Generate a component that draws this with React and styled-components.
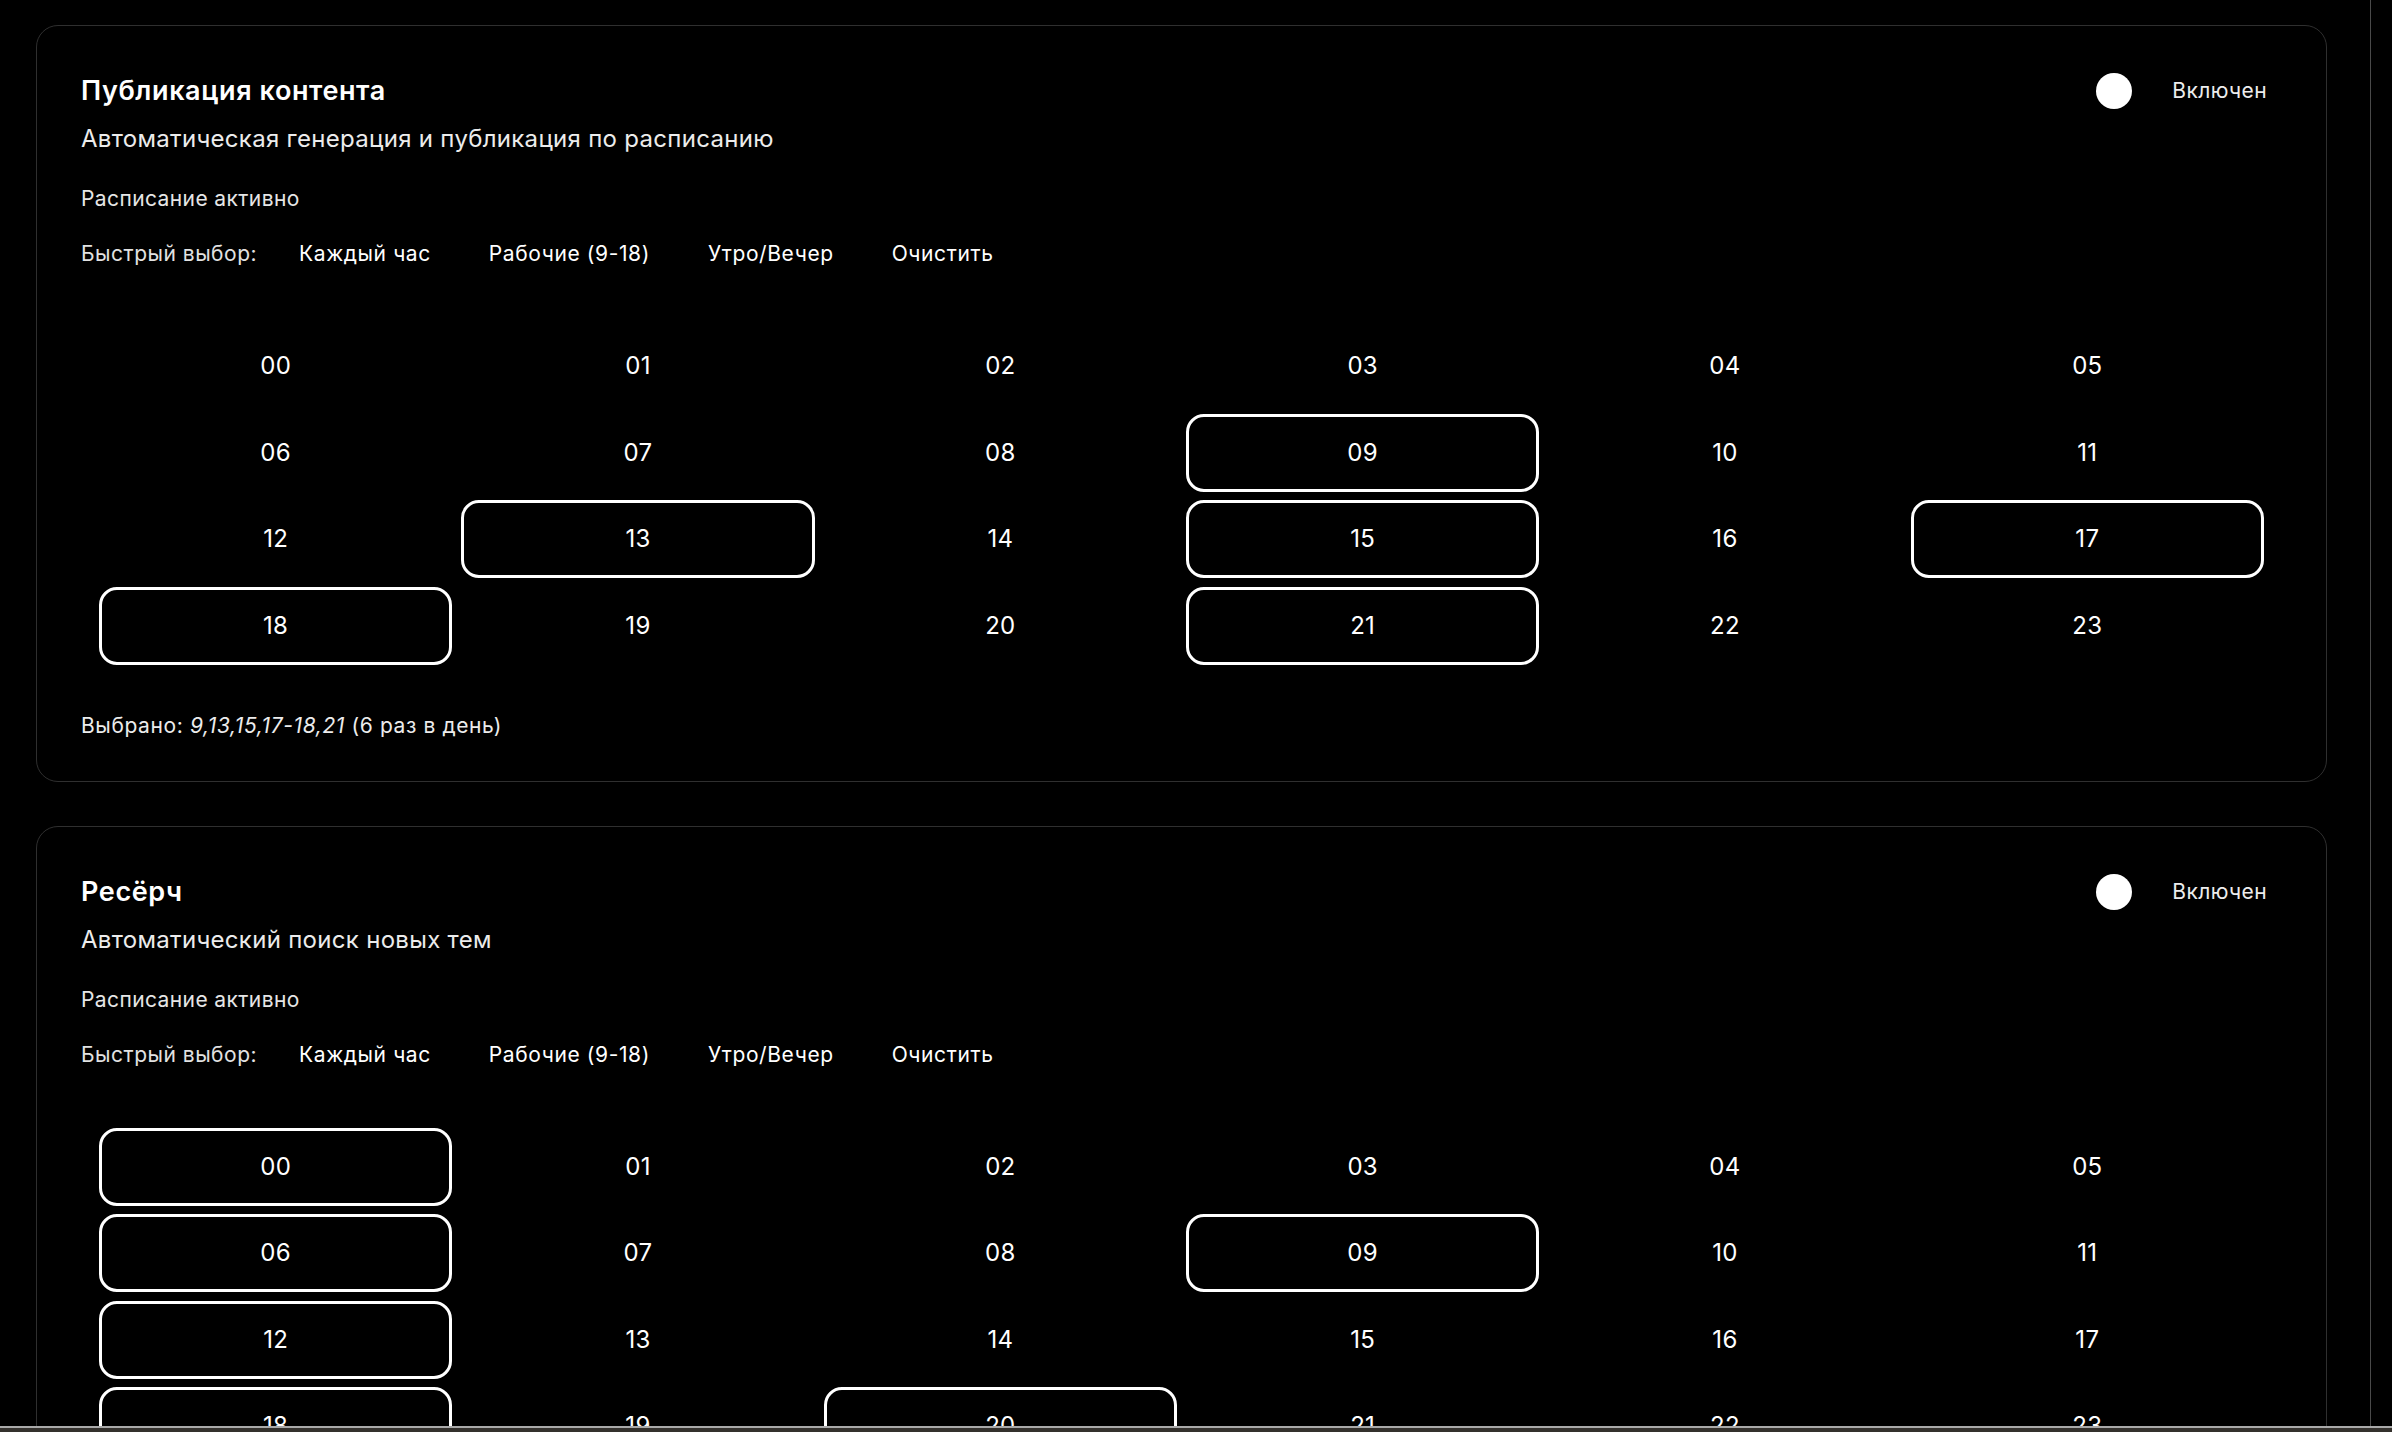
import React from "react";
import styled, { createGlobalStyle } from "styled-components";

const GlobalStyle = createGlobalStyle`
  html, body {
    margin: 0;
    padding: 0;
    background: #000;
  }
  body {
    font-family: Inter, "Noto Sans", "Liberation Sans", sans-serif;
    color: #fff;
    overflow: hidden;
    -webkit-font-smoothing: antialiased;
  }
  * { box-sizing: border-box; }
`;

const Screen = styled.div`
  width: 2392px;
  height: 1432px;
  display: flex;
  flex-direction: column;
  overflow: hidden;
  background: #000;
`;

const Viewport = styled.div`
  flex: 1;
  min-height: 0;
  display: flex;
  overflow: hidden;
`;

const Main = styled.main`
  flex: 1;
  min-width: 0;
  padding: 25px 43px 0 36px;
  display: flex;
  flex-direction: column;
  gap: 44px;
  overflow: hidden;
`;

const Rail = styled.div`
  width: 22px;
  flex-shrink: 0;
  border-left: 1px solid #4a4a4a;
  background: #000;
`;

const BottomEdge = styled.div`
  height: 6px;
  flex-shrink: 0;
  border-top: 2px solid #a9a9a9;
  background: #34312d;
`;

const Card = styled.section`
  flex-shrink: 0;
  border: 1px solid #2f2f2f;
  border-radius: 22px;
  padding: 47px 44px 41px;
  background: #000;
`;

const Header = styled.header`
  display: flex;
  justify-content: space-between;
  align-items: flex-start;
`;

const TitleBlock = styled.div`
  display: flex;
  flex-direction: column;
`;

const Title = styled.h2`
  margin: 0;
  font-size: 27px;
  line-height: 36px;
  font-weight: 600;
  letter-spacing: 0.6px;
  color: #fff;
`;

const Subtitle = styled.p`
  margin: 14px 0 0;
  font-size: 24px;
  line-height: 32px;
  font-weight: 400;
  letter-spacing: 0.3px;
  color: #ececec;
`;

const StatusGroup = styled.div`
  display: flex;
  align-items: center;
  gap: 16px;
  height: 36px;
  margin-top: 0;
  margin-right: 15px;
`;

const SwitchTrack = styled.div`
  width: 60px;
  height: 36px;
  display: flex;
  align-items: center;
  justify-content: flex-start;
  background: transparent;
`;

const SwitchThumb = styled.span`
  width: 36px;
  height: 36px;
  border-radius: 50%;
  background: #fff;
`;

const StatusLabel = styled.span`
  font-size: 21px;
  line-height: 28px;
  letter-spacing: 0.4px;
  color: #ededed;
`;

const ScheduleState = styled.div`
  margin-top: 30px;
  font-size: 21px;
  line-height: 28px;
  letter-spacing: 0.4px;
  color: #e6e6e6;
`;

const QuickRow = styled.div`
  margin-top: 20px;
  height: 42px;
  display: flex;
  align-items: center;
  gap: 22px;
`;

const QuickLabel = styled.span`
  font-size: 21px;
  line-height: 28px;
  letter-spacing: 0.5px;
  color: #e2e2e2;
  margin-right: 2px;
`;

const QuickButton = styled.button`
  height: 42px;
  padding: 0 18px;
  border: none;
  background: transparent;
  color: #fff;
  font-family: inherit;
  font-size: 21px;
  line-height: 28px;
  letter-spacing: 0.6px;
  cursor: pointer;
`;

const HourGrid = styled.div`
  margin-top: 34px;
  padding: 18px;
  display: grid;
  grid-template-columns: repeat(6, 1fr);
  gap: 8.5px 9px;
`;

const HourCell = styled.button`
  height: 78px;
  display: flex;
  align-items: center;
  justify-content: center;
  border: 3px solid ${(p) => (p.$selected ? "#fff" : "transparent")};
  border-radius: 18px;
  background: transparent;
  color: #fff;
  font-family: inherit;
  font-size: 24px;
  line-height: 32px;
  letter-spacing: 0.3px;
  cursor: pointer;
`;

const Summary = styled.p`
  margin: 29px 0 0;
  font-size: 21px;
  line-height: 28px;
  letter-spacing: 0.6px;
  color: #ececec;
`;

const Hours = styled.em`
  font-style: italic;
`;

function compress(hours) {
  const sorted = [...hours].sort((a, b) => a - b);
  const parts = [];
  let i = 0;
  while (i < sorted.length) {
    let j = i;
    while (j + 1 < sorted.length && sorted[j + 1] === sorted[j] + 1) j++;
    parts.push(j > i ? `${sorted[i]}-${sorted[j]}` : `${sorted[i]}`);
    i = j + 1;
  }
  return parts.join(",");
}

const cards = [
  {
    title: "Публикация контента",
    subtitle: "Автоматическая генерация и публикация по расписанию",
    selected: [9, 13, 15, 17, 18, 21],
  },
  {
    title: "Ресёрч",
    subtitle: "Автоматический поиск новых тем",
    selected: [0, 6, 9, 12, 18, 20],
  },
];

const quick = ["Каждый час", "Рабочие (9-18)", "Утро/Вечер", "Очистить"];

function ScheduleCard({ title, subtitle, selected }) {
  const hours = Array.from({ length: 24 }, (_, i) => i);
  return (
    <Card>
      <Header>
        <TitleBlock>
          <Title>{title}</Title>
          <Subtitle>{subtitle}</Subtitle>
        </TitleBlock>
        <StatusGroup>
          <SwitchTrack>
            <SwitchThumb />
          </SwitchTrack>
          <StatusLabel>Включен</StatusLabel>
        </StatusGroup>
      </Header>
      <ScheduleState>Расписание активно</ScheduleState>
      <QuickRow>
        <QuickLabel>Быстрый выбор:</QuickLabel>
        {quick.map((q) => (
          <QuickButton key={q}>{q}</QuickButton>
        ))}
      </QuickRow>
      <HourGrid>
        {hours.map((h) => (
          <HourCell key={h} $selected={selected.includes(h)}>
            {String(h).padStart(2, "0")}
          </HourCell>
        ))}
      </HourGrid>
      <Summary>
        Выбрано: <Hours>{compress(selected)}</Hours> ({selected.length} раз в
        день)
      </Summary>
    </Card>
  );
}

export default function App() {
  return (
    <>
      <GlobalStyle />
      <Screen>
        <Viewport>
          <Main>
            {cards.map((c) => (
              <ScheduleCard key={c.title} {...c} />
            ))}
          </Main>
          <Rail />
        </Viewport>
        <BottomEdge />
      </Screen>
    </>
  );
}
